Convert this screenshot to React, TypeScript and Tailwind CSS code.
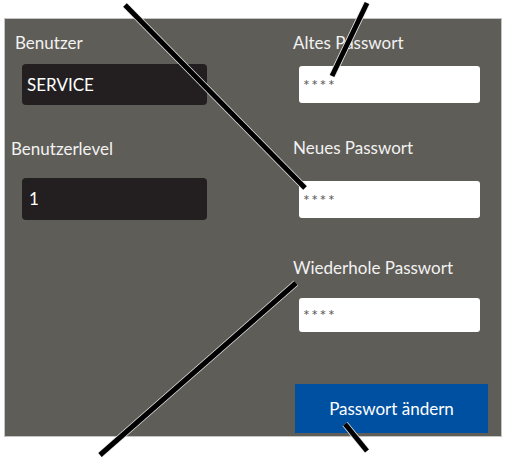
export default function App() {
  const lines = [
    { x1: 125, y1: 5, x2: 305, y2: 188 },
    { x1: 367, y1: 3, x2: 332, y2: 76 },
    { x1: 100, y1: 455, x2: 296, y2: 283 },
    { x1: 345, y1: 424, x2: 367, y2: 451 },
  ];

  return (
    <div className="relative w-[506px] h-[460px] bg-white overflow-hidden font-['Lato',sans-serif]">
      {/* Panel */}
      <div className="ml-[4px] mt-[18px] w-[498px] h-[419px] border border-[#c4c4c4] bg-[#5f5d57] flex">
        {/* Left column */}
        <div className="w-[288px] flex flex-col pt-[14px]">
          <div className="ml-[10px] h-[20px] leading-[20px] text-[17px] text-[#f2f2f2]">Benutzer</div>
          <div className="ml-[17px] mt-[11px] w-[185px] h-[41px] rounded-[4px] bg-[#231f20] flex items-center pl-[5px] text-[17px] text-white">
            SERVICE
          </div>
          <div className="ml-[6px] mt-[34px] h-[20px] leading-[20px] text-[17px] text-[#f2f2f2]">Benutzerlevel</div>
          <div className="ml-[17px] mt-[19px] w-[185px] h-[42px] rounded-[4px] bg-[#231f20] flex items-center pl-[7px] text-[17px] text-white">
            1
          </div>
        </div>

        {/* Right column */}
        <div className="flex flex-col pt-[14px]">
          <div className="h-[20px] leading-[20px] text-[17px] text-[#f2f2f2]">Altes Passwort</div>
          <div className="ml-[6px] mt-[13px] w-[181px] h-[37px] rounded-[3px] bg-white flex items-center pl-[4px] text-[16px] tracking-[1.5px] text-[#595959]">
            ****
          </div>
          <div className="mt-[35px] h-[20px] leading-[20px] text-[17px] text-[#f2f2f2]">Neues Passwort</div>
          <div className="ml-[6px] mt-[23px] w-[181px] h-[37px] rounded-[3px] bg-white flex items-center pl-[4px] text-[16px] tracking-[1.5px] text-[#595959]">
            ****
          </div>
          <div className="mt-[40px] h-[20px] leading-[20px] text-[17px] text-[#f2f2f2]">Wiederhole Passwort</div>
          <div className="ml-[6px] mt-[20px] w-[181px] h-[34px] rounded-[3px] bg-white flex items-center pl-[4px] text-[16px] tracking-[1.5px] text-[#595959]">
            ****
          </div>
          <button className="ml-[2px] mt-[52px] w-[193px] h-[49px] bg-[#0050a2] text-white text-[17px] flex items-center justify-center">
            Passwort ändern
          </button>
        </div>
      </div>

      {/* Annotation lines */}
      <svg className="absolute inset-0 pointer-events-none" width="506" height="460" viewBox="0 0 506 460">
        {lines.map((l, i) => (
          <g key={i}>
            <line {...l} stroke="#e8e8e8" strokeWidth="6.5" />
            <line {...l} stroke="#000" strokeWidth="5" />
          </g>
        ))}
      </svg>
    </div>
  );
}
